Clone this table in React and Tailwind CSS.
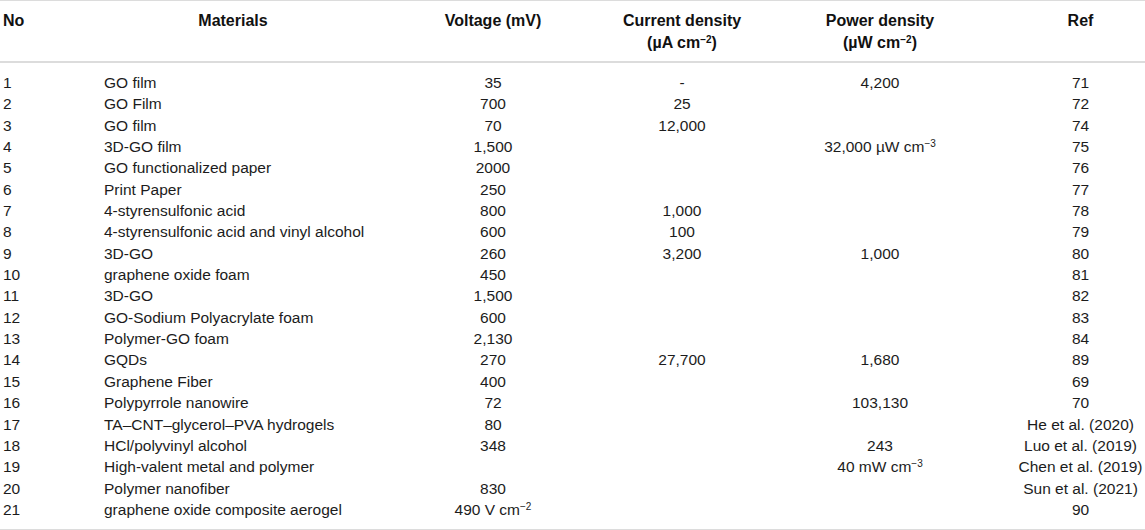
const Sup = ({ children }) => <sup className="text-[10px]">{children}</sup>;

const rows = [
  ["1", "GO film", "35", "-", "4,200", "71"],
  ["2", "GO Film", "700", "25", "", "72"],
  ["3", "GO film", "70", "12,000", "", "74"],
  ["4", "3D-GO film", "1,500", "", <>32,000 µW cm<Sup>−3</Sup></>, "75"],
  ["5", "GO functionalized paper", "2000", "", "", "76"],
  ["6", "Print Paper", "250", "", "", "77"],
  ["7", "4-styrensulfonic acid", "800", "1,000", "", "78"],
  ["8", "4-styrensulfonic acid and vinyl alcohol", "600", "100", "", "79"],
  ["9", "3D-GO", "260", "3,200", "1,000", "80"],
  ["10", "graphene oxide foam", "450", "", "", "81"],
  ["11", "3D-GO", "1,500", "", "", "82"],
  ["12", "GO-Sodium Polyacrylate foam", "600", "", "", "83"],
  ["13", "Polymer-GO foam", "2,130", "", "", "84"],
  ["14", "GQDs", "270", "27,700", "1,680", "89"],
  ["15", "Graphene Fiber", "400", "", "", "69"],
  ["16", "Polypyrrole nanowire", "72", "", "103,130", "70"],
  ["17", "TA–CNT–glycerol–PVA hydrogels", "80", "", "", "He et al. (2020)"],
  ["18", "HCl/polyvinyl alcohol", "348", "", "243", "Luo et al. (2019)"],
  ["19", "High-valent metal and polymer", "", "", <>40 mW cm<Sup>−3</Sup></>, "Chen et al. (2019)"],
  ["20", "Polymer nanofiber", "830", "", "", "Sun et al. (2021)"],
  ["21", "graphene oxide composite aerogel", <>490 V cm<Sup>−2</Sup></>, "", "", "90"],
];

export default function App() {
  return (
    <div className="w-[1145px] h-[530px] bg-white text-[#1c1c1c] font-['Liberation_Sans',Arial,sans-serif] text-[15.5px]">
      <table className="w-[1145px] table-fixed border-collapse">
        <colgroup>
          <col className="w-[100px]" />
          <col className="w-[266px]" />
          <col className="w-[254px]" />
          <col className="w-[124px]" />
          <col className="w-[272px]" />
          <col className="w-[129px]" />
        </colgroup>
        <thead>
          <tr className="border-t border-b-2 border-[#dcdcdc] font-bold text-[16px] text-[#111] align-top leading-[21.5px]">
            <th className="pl-[3px] pt-[9px] pb-[8px] text-left">No</th>
            <th className="pt-[9px] pb-[8px] text-center">Materials</th>
            <th className="pt-[9px] pb-[8px] text-center">Voltage (mV)</th>
            <th className="pt-[9px] pb-[8px] text-center whitespace-nowrap">
              Current density
              <br />
              (µA cm<Sup>−2</Sup>)
            </th>
            <th className="pt-[9px] pb-[8px] text-center">
              Power density
              <br />
              (µW cm<Sup>−2</Sup>)
            </th>
            <th className="pt-[9px] pb-[8px] text-center">Ref</th>
          </tr>
        </thead>
        <tbody className="border-b-2 border-[#dcdcdc]">
          {rows.map((r, i) => {
            const pad = i === 0 ? "pt-[9px]" : i === rows.length - 1 ? "pb-[9px]" : "";
            return (
              <tr key={i} className="leading-[21.35px] align-top">
                <td className={`pl-[3px] text-left ${pad}`}>{r[0]}</td>
                <td className={`pl-[4px] text-left whitespace-nowrap ${pad}`}>{r[1]}</td>
                <td className={`text-center whitespace-nowrap ${pad}`}>{r[2]}</td>
                <td className={`text-center whitespace-nowrap ${pad}`}>{r[3]}</td>
                <td className={`text-center whitespace-nowrap ${pad}`}>{r[4]}</td>
                <td className={`text-center whitespace-nowrap ${pad}`}>{r[5]}</td>
              </tr>
            );
          })}
        </tbody>
      </table>
    </div>
  );
}
